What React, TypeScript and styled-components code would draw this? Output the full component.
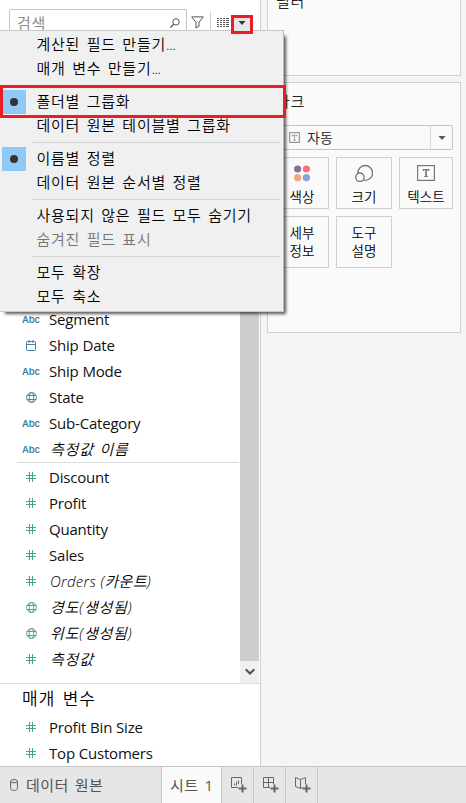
import React from "react";
import styled, { createGlobalStyle, css } from "styled-components";

const GlobalStyle = createGlobalStyle`
  * { box-sizing: border-box; }
  body {
    margin: 0;
    background: #f5f5f5;
    font-family: "Open Sans", "Noto Sans CJK KR", sans-serif;
    color: #111;
  }
  svg { display: block; flex: none; }
`;

const Window = styled.div`
  position: relative;
  display: flex;
  flex-direction: column;
  width: 466px;
  height: 803px;
  overflow: hidden;
  background: #f5f5f5;
`;

const Workspace = styled.div`
  display: flex;
  height: 766px;
`;

/* ---------- data pane ---------- */

const DataPane = styled.aside`
  display: flex;
  flex-direction: column;
  width: 261px;
  background: #fff;
  border-right: 1px solid #cfcfcf;
`;

const SearchBar = styled.div`
  display: flex;
  align-items: flex-start;
  height: 36px;
  padding: 9px 0 0 9px;
`;

const SearchBox = styled.div`
  display: flex;
  align-items: center;
  justify-content: space-between;
  width: 178px;
  height: 27px;
  padding: 0 6px 0 7px;
  border: 1px solid #c4c4c4;
  border-radius: 2px;
  font-size: 15px;
  letter-spacing: 0.8px;
  color: #8c8c8c;
`;

const FilterButton = styled.div`
  width: 23px;
  padding: 7px 0 0 4px;
`;

const ViewButton = styled.div`
  height: 24px;
  margin-top: 3px;
  padding: 6px 0 0 6px;
  border-left: 1px solid #cfcfcf;
`;

const FieldArea = styled.div`
  display: flex;
  height: 647px;
`;

const FieldList = styled.div`
  display: flex;
  flex: 1;
  flex-direction: column;
  justify-content: flex-end;
  padding-bottom: 11px;
  overflow: hidden;
`;

const FieldDivider = styled.div`
  height: 1px;
  margin: 0 1px 1px 17px;
  background: #dcdcdc;
`;

const Field = styled.div`
  display: flex;
  align-items: center;
  flex: none;
  height: 26px;
`;

const FieldIcon = styled.span`
  display: flex;
  justify-content: center;
  width: 62px;
  margin-right: -13px;
`;

const AbcMark = styled.span`
  padding-top: 1px;
  font: 600 9.5px/12px Inter, sans-serif;
  letter-spacing: -0.2px;
  color: #3f82a0;
`;

const FieldName = styled.span<{ $generated?: boolean; $korean?: boolean }>`
  font-size: 15px;
  line-height: 26px;
  letter-spacing: -0.2px;
  word-spacing: 0.2px;
  white-space: pre;
  ${(p) => p.$generated && css`
    padding-left: 1px;
    font-style: italic;
    font-weight: 350;
    letter-spacing: 0.25px;
    color: #000;
  `}
  ${(p) => p.$korean && css`letter-spacing: 0.8px; word-spacing: 1px;`}
`;

const Scrollbar = styled.div`
  display: flex;
  flex-direction: column;
  width: 20px;
  padding-right: 1px;
`;

const ScrollThumb = styled.div`
  flex: 1;
  background: #cdcdcd;
`;

const ScrollDown = styled.div`
  display: flex;
  align-items: center;
  justify-content: center;
  height: 22px;
  background: #f0f0f0;
`;

const Parameters = styled.section`
  border-top: 1px solid #dedede;
`;

const ParametersTitle = styled.h2`
  height: 30px;
  margin: 0;
  padding-left: 22px;
  font-size: 17px;
  font-weight: 350;
  line-height: 30px;
  letter-spacing: 1px;
  word-spacing: 2px;
  color: #000;
`;

/* ---------- shelves ---------- */

const Shelves = styled.main`
  display: flex;
  flex-direction: column;
  gap: 6px;
  padding-left: 6px;
`;

const Card = styled.section<{ $height: number; $clipped?: boolean }>`
  width: 194px;
  height: ${(p) => p.$height}px;
  padding: 0 7px;
  background: #fafafa;
  border: 1px solid #d0d0d0;
  ${(p) => p.$clipped && css`border-top: 0;`}
`;

const CardTitle = styled.h3<{ $height: number; $line: number }>`
  height: ${(p) => p.$height}px;
  margin: 0;
  padding-left: 1px;
  font-size: 15px;
  font-weight: 350;
  line-height: ${(p) => p.$line}px;
  letter-spacing: 0.7px;
  color: #222;
`;

const MarkSelect = styled.div`
  display: flex;
  width: 178px;
  height: 25px;
  border: 1px solid #c6c6c6;
  border-radius: 2px;
`;

const MarkValue = styled.div`
  display: flex;
  flex: 1;
  align-items: center;
  gap: 7px;
  padding-left: 13px;
  font-size: 14px;
  font-weight: 350;
  line-height: 20px;
  color: #222;
`;

const MarkArrow = styled.div`
  display: flex;
  align-items: center;
  justify-content: center;
  width: 22px;
  border-left: 1px solid #d8d8d8;
`;

const MarkGrid = styled.div`
  display: grid;
  grid-template-columns: 54px 56px 54px;
  grid-auto-rows: 52px;
  gap: 7px;
  margin-top: 7px;
`;

const MarkButton = styled.button<{ $textOnly?: boolean }>`
  display: flex;
  flex-direction: column;
  align-items: center;
  justify-content: ${(p) => (p.$textOnly ? "center" : "flex-start")};
  padding: ${(p) => (p.$textOnly ? "0 0 1px" : "6px 0 0")};
  background: #fafafa;
  border: 1px solid #cfcfcf;
  font-family: inherit;
  font-size: 13.5px;
  font-weight: 350;
  line-height: 18px;
  color: #000;
  white-space: pre;
`;

const MarkLabel = styled.span<{ $gap?: boolean }>`
  margin-top: ${(p) => (p.$gap ? 6 : 0)}px;
`;

/* ---------- sheet tabs ---------- */

const TabBar = styled.footer`
  display: flex;
  height: 37px;
  background: #e6e6e6;
  border-top: 1px solid #c4c4c4;
`;

const Tab = styled.div<{ $width: number; $active?: boolean; $left?: number }>`
  display: flex;
  align-items: center;
  width: ${(p) => p.$width}px;
  padding-left: ${(p) => p.$left ?? 8}px;
  border-right: 1px solid #c6c6c6;
  background: ${(p) => (p.$active ? "#fafafa" : "transparent")};
  font-size: 15px;
  letter-spacing: 0.5px;
  word-spacing: 1.5px;
  white-space: pre;
  color: #555;
`;

const TabName = styled.span<{ $gap?: boolean }>`
  margin-left: ${(p) => (p.$gap ? 8 : 0)}px;
  padding-bottom: 2px;
`;

/* ---------- popup menu ---------- */

const Menu = styled.div`
  position: absolute;
  top: 30px;
  left: -1px;
  width: 285px;
  height: 282px;
  padding: 2px 0 0 3px;
  background: #f0f0f0;
  border: 1px solid #c8c8c8;
  border-right-color: #bbb;
  box-shadow: 4px 4px 3px -2px rgba(0, 0, 0, 0.65);
`;

const MenuItem = styled.div<{ $disabled?: boolean }>`
  display: flex;
  height: 24px;
  font-size: 15px;
  font-weight: 350;
  line-height: 23px;
  letter-spacing: 0.75px;
  word-spacing: 1.9px;
  white-space: pre;
  color: ${(p) => (p.$disabled ? "#757575" : "#000")};
`;

const Dots = styled.span`
  letter-spacing: -0.5px;
`;

const CheckCell = styled.span<{ $checked?: boolean }>`
  display: flex;
  align-items: center;
  justify-content: center;
  width: 24px;
  height: 24px;
  margin-left: -1px;
  margin-right: 10.5px;
  background: ${(p) => (p.$checked ? "#91c8f6" : "transparent")};
`;

const CheckDot = styled.span`
  width: 8px;
  height: 8px;
  border-radius: 50%;
  background: #333;
`;

const MenuDivider = styled.div`
  height: 1px;
  margin: 4px 3px 4px 29px;
  background: #d3d3d3;
`;

const Highlight = styled.div<{ $x: number; $y: number; $w: number; $h: number }>`
  position: absolute;
  left: ${(p) => p.$x}px;
  top: ${(p) => p.$y}px;
  width: ${(p) => p.$w}px;
  height: ${(p) => p.$h}px;
  border: 3px solid #ed1c24;
`;

const MenuTrigger = styled(Highlight)`
  display: flex;
  justify-content: center;
  padding-top: 3px;
  background: #e6e6e6;
`;

/* ---------- icons ---------- */

const BLUE = "#3f86a3";
const GREEN = "#3fa783";

const HashIcon = () => (
  <svg width="10" height="10" viewBox="0 0 10 10" stroke={GREEN} fill="none">
    <path d="M3.5 0v10M6.5 0v10M0 3.5h10M0 6.5h10" />
  </svg>
);

const GlobeIcon = ({ color }: { color: string }) => (
  <svg width="11" height="11" viewBox="0 0 11 11" stroke={color} fill="none" strokeWidth="0.95">
    <circle cx="5.5" cy="5.5" r="4.9" />
    <ellipse cx="5.5" cy="5.5" rx="2.2" ry="4.9" />
    <path d="M1 3.5h9M1 7.5h9" />
  </svg>
);

const CalendarIcon = () => (
  <svg width="10" height="11" viewBox="0 0 10 11" stroke={BLUE} fill="none">
    <rect x="0.5" y="1.5" width="9" height="9" rx="0.8" />
    <path d="M0.5 4.5h9M3 0v3M7 0v3" />
  </svg>
);

const Caret = ({ color = "#333" }: { color?: string }) => (
  <svg width="8" height="4" viewBox="0 0 8 4" fill={color}>
    <path d="M0.5 0h7L4 4z" />
  </svg>
);

const SearchIcon = () => (
  <svg width="10" height="10" viewBox="0 0 10 10" stroke="#555" fill="none">
    <circle cx="6" cy="3.9" r="3.2" />
    <path d="M3.7 6.2L0.4 9.5" strokeWidth="1.3" />
  </svg>
);

const FunnelIcon = () => (
  <svg width="13" height="13" viewBox="0 0 13 13" stroke="#555" fill="none">
    <path d="M0.7 0.9h11.6L8 6.3v3.9l-3 2V6.3z" strokeLinejoin="round" />
  </svg>
);

const ListIcon = () => (
  <svg width="12" height="9" viewBox="0 0 12 9" stroke="#555" strokeDasharray="2 1 2 1 2 1 3 0">
    <path d="M0 0.5h12M0 2.5h12M0 4.5h12M0 6.5h12M0 8.5h12" />
  </svg>
);

const SmallTextIcon = () => (
  <svg width="11" height="11" viewBox="0 0 11 11" fill="none" stroke="#999">
    <rect x="0.6" y="0.6" width="9.8" height="9.8" strokeWidth="1.2" />
    <path d="M3 4.4V3.2h5v1.2M5.5 3.2v5M4.2 8.2h2.6" />
  </svg>
);

const ColorIcon = () => (
  <svg width="18" height="18" viewBox="0 0 18 18">
    <circle cx="4.6" cy="5" r="3.6" fill="#86739b" />
    <circle cx="13.4" cy="5" r="3.6" fill="#f9717d" />
    <circle cx="4.6" cy="13.7" r="3.6" fill="#f4a57c" />
    <circle cx="13.4" cy="13.7" r="3.6" fill="#80a7cf" />
  </svg>
);

const SizeIcon = () => (
  <svg width="18" height="18" viewBox="0 0 18 18" fill="none" stroke="#777" strokeWidth="1.3">
    <circle cx="10.2" cy="8.9" r="7.4" />
    <circle cx="4.9" cy="13.2" r="4.2" fill="#fafafa" />
  </svg>
);

const TextIcon = () => (
  <svg width="18" height="18" viewBox="0 0 18 18" fill="none" stroke="#777">
    <rect x="0.6" y="1.6" width="16.8" height="14.8" strokeWidth="1.2" />
    <path d="M6.4 7V5.6h5.4V7M7.3 12.5h3.6" strokeWidth="1.1" />
    <path d="M9.1 5.6v7" strokeWidth="1.7" />
  </svg>
);

const DatabaseIcon = () => (
  <svg width="8" height="12" viewBox="0 0 8 12" fill="none" stroke="#666">
    <ellipse cx="4" cy="2.2" rx="3.4" ry="1.6" />
    <path d="M0.6 2.2v7.6c0 0.9 1.5 1.6 3.4 1.6s3.4-0.7 3.4-1.6V2.2" />
  </svg>
);

const Plus = () => <path d="M11.5 7.5v8M7.5 11.5h8" strokeWidth="2" />;

const NewSheetIcon = () => (
  <svg width="16" height="16" viewBox="0 0 16 16" fill="none" stroke="#666">
    <path d="M7 10.5H0.5V0.5h10V7M3.5 8.5V6.5M5.5 8.5V4.5M7.5 7V3.5" />
    <Plus />
  </svg>
);

const NewDashboardIcon = () => (
  <svg width="16" height="16" viewBox="0 0 16 16" fill="none" stroke="#666">
    <path d="M7 10.5H0.5V0.5h10V7M5.5 0.5v10M0.5 5.5h10" />
    <Plus />
  </svg>
);

const NewStoryIcon = () => (
  <svg width="16" height="16" viewBox="0 0 16 16" fill="none" stroke="#666">
    <path d="M7.5 10.3L5.5 11.4L0.5 9.5V0.6L5.5 2.5L10.5 0.6V7M5.5 2.5v8.9" />
    <Plus />
  </svg>
);

/* ---------- content ---------- */

type Kind = "text" | "date" | "geo" | "number" | "geoMeasure";
type FieldData = { kind: Kind; name: string; generated?: boolean; korean?: boolean };

const dimensions: FieldData[] = [
  { kind: "text", name: "Segment" },
  { kind: "date", name: "Ship Date" },
  { kind: "text", name: "Ship Mode" },
  { kind: "geo", name: "State" },
  { kind: "text", name: "Sub-Category" },
  { kind: "text", name: "측정값 이름", generated: true, korean: true },
];

const measures: FieldData[] = [
  { kind: "number", name: "Discount" },
  { kind: "number", name: "Profit" },
  { kind: "number", name: "Quantity" },
  { kind: "number", name: "Sales" },
  { kind: "number", name: "Orders (카운트)", generated: true },
  { kind: "geoMeasure", name: "경도(생성됨)", generated: true, korean: true },
  { kind: "geoMeasure", name: "위도(생성됨)", generated: true, korean: true },
  { kind: "number", name: "측정값", generated: true, korean: true },
];

const parameters: FieldData[] = [
  { kind: "number", name: "Profit Bin Size" },
  { kind: "number", name: "Top Customers" },
];

type Entry = { label: string; opensDialog?: boolean; checked?: boolean; disabled?: boolean };

const menuGroups: Entry[][] = [
  [
    { label: "계산된 필드 만들기", opensDialog: true },
    { label: "매개 변수 만들기", opensDialog: true },
  ],
  [{ label: "폴더별 그룹화", checked: true }, { label: "데이터 원본 테이블별 그룹화" }],
  [{ label: "이름별 정렬", checked: true }, { label: "데이터 원본 순서별 정렬" }],
  [{ label: "사용되지 않은 필드 모두 숨기기" }, { label: "숨겨진 필드 표시", disabled: true }],
  [{ label: "모두 확장" }, { label: "모두 축소" }],
];

const kindIcon: Record<Kind, React.ReactNode> = {
  text: <AbcMark>Abc</AbcMark>,
  date: <CalendarIcon />,
  geo: <GlobeIcon color={BLUE} />,
  number: <HashIcon />,
  geoMeasure: <GlobeIcon color={GREEN} />,
};

const FieldRow = ({ kind, name, generated, korean }: FieldData) => (
  <Field>
    <FieldIcon>{kindIcon[kind]}</FieldIcon>
    <FieldName $generated={generated} $korean={korean}>{name}</FieldName>
  </Field>
);

export default function App() {
  return (
    <>
      <GlobalStyle />
      <Window>
        <Workspace>
          <DataPane>
            <SearchBar>
              <SearchBox>
                검색
                <SearchIcon />
              </SearchBox>
              <FilterButton><FunnelIcon /></FilterButton>
              <ViewButton><ListIcon /></ViewButton>
            </SearchBar>
            <FieldArea>
              <FieldList>
                {dimensions.map((f) => <FieldRow key={f.name} {...f} />)}
                <FieldDivider />
                {measures.map((f) => <FieldRow key={f.name} {...f} />)}
              </FieldList>
              <Scrollbar>
                <ScrollThumb />
                <ScrollDown>
                  <svg width="10" height="8" viewBox="0 0 10 8" fill="none" stroke="#505050" strokeWidth="2">
                    <path d="M0.7 1.2L5 5.5L9.3 1.2" />
                  </svg>
                </ScrollDown>
              </Scrollbar>
            </FieldArea>
            <Parameters>
              <ParametersTitle>매개 변수</ParametersTitle>
              {parameters.map((f) => <FieldRow key={f.name} {...f} />)}
            </Parameters>
          </DataPane>

          <Shelves>
            <Card $height={76} $clipped>
              <CardTitle $height={30} $line={2}>필터</CardTitle>
            </Card>
            <Card $height={251}>
              <CardTitle $height={42} $line={36}>마크</CardTitle>
              <MarkSelect>
                <MarkValue><SmallTextIcon />자동</MarkValue>
                <MarkArrow><Caret color="#555" /></MarkArrow>
              </MarkSelect>
              <MarkGrid>
                <MarkButton><ColorIcon /><MarkLabel $gap>색상</MarkLabel></MarkButton>
                <MarkButton><SizeIcon /><MarkLabel $gap>크기</MarkLabel></MarkButton>
                <MarkButton><TextIcon /><MarkLabel $gap>텍스트</MarkLabel></MarkButton>
                <MarkButton $textOnly><MarkLabel>{"세부\n정보"}</MarkLabel></MarkButton>
                <MarkButton $textOnly><MarkLabel>{"도구\n설명"}</MarkLabel></MarkButton>
              </MarkGrid>
            </Card>
          </Shelves>
        </Workspace>

        <TabBar>
          <Tab $width={162} $left={10}><DatabaseIcon /><TabName $gap>데이터 원본</TabName></Tab>
          <Tab $width={60} $active><TabName>시트 1</TabName></Tab>
          <Tab $width={32} $left={9}><NewSheetIcon /></Tab>
          <Tab $width={32} $left={9}><NewDashboardIcon /></Tab>
          <Tab $width={32} $left={9}><NewStoryIcon /></Tab>
        </TabBar>

        <Menu>
          {menuGroups.map((group, i) => (
            <React.Fragment key={i}>
              {i > 0 && <MenuDivider />}
              {group.map((item) => (
                <MenuItem key={item.label} $disabled={item.disabled}>
                  <CheckCell $checked={item.checked}>{item.checked && <CheckDot />}</CheckCell>
                  <span>{item.label}{item.opensDialog && <Dots>...</Dots>}</span>
                </MenuItem>
              ))}
            </React.Fragment>
          ))}
        </Menu>
        <Highlight $x={0} $y={85} $w={286} $h={33} />
        <MenuTrigger $x={231} $y={15} $w={22} $h={19}><Caret /></MenuTrigger>
      </Window>
    </>
  );
}
